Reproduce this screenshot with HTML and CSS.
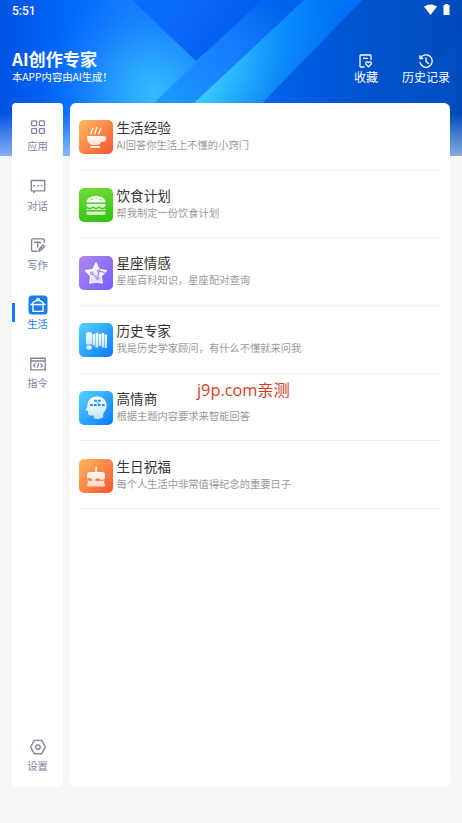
FILE: index.html
```html
<!DOCTYPE html>
<html lang="zh-CN">
<head>
<meta charset="utf-8">
<title>AI创作专家</title>
<link rel="stylesheet" href="styles.css">
</head>
<body>
<svg width="0" height="0" class="defs">
  <defs>
    <linearGradient id="ink" x1="0" y1="0" x2="0" y2="1"><stop offset="0" stop-color="#fff"/><stop offset="1" stop-color="#fff" stop-opacity=".72"/></linearGradient>
  </defs>
</svg>
<div class="app">
  <svg class="backdrop" viewBox="0 0 462 156" preserveAspectRatio="none">
    <defs>
      <linearGradient id="base" x1="0" x2="1" y1="0" y2="0"><stop offset="0" stop-color="#0052e2"/><stop offset=".14" stop-color="#0068fb"/><stop offset=".3" stop-color="#137bff"/><stop offset=".5" stop-color="#006cf8"/><stop offset=".66" stop-color="#005de2"/><stop offset=".8" stop-color="#0052cc"/><stop offset="1" stop-color="#004bbb"/></linearGradient>
      <radialGradient id="glow" gradientUnits="userSpaceOnUse" cx="154" cy="92" r="112"><stop offset="0" stop-color="#35bdff"/><stop offset=".45" stop-color="#2499ff" stop-opacity=".85"/><stop offset="1" stop-color="#1674ff" stop-opacity="0"/></radialGradient>
      <linearGradient id="dark" gradientUnits="userSpaceOnUse" x1="150" y1="0" x2="220" y2="50"><stop offset="0" stop-color="#0a6cfc"/><stop offset=".5" stop-color="#0a68f8"/><stop offset="1" stop-color="#005ff0"/></linearGradient>
      <linearGradient id="bandA" gradientUnits="userSpaceOnUse" x1="280" y1="0" x2="170" y2="103"><stop offset="0" stop-color="#0062ea"/><stop offset=".45" stop-color="#177bff"/><stop offset="1" stop-color="#1c98ff"/></linearGradient>
      <linearGradient id="bandB" gradientUnits="userSpaceOnUse" x1="325" y1="0" x2="215" y2="103"><stop offset="0" stop-color="#007af8"/><stop offset=".35" stop-color="#0d94ff"/><stop offset=".75" stop-color="#2cbcff"/><stop offset="1" stop-color="#36cbff"/></linearGradient>
      <linearGradient id="shade" gradientUnits="userSpaceOnUse" x1="248" y1="50" x2="284" y2="86"><stop offset="0" stop-color="#0068f0" stop-opacity="0"/><stop offset="1" stop-color="#0068f0" stop-opacity=".6"/></linearGradient>
      <linearGradient id="fade" x1="0" x2="0" y1="0" y2="1"><stop offset=".73" stop-color="#fff" stop-opacity="0"/><stop offset="1" stop-color="#f4f8ff" stop-opacity=".55"/></linearGradient>
    </defs>
    <rect width="462" height="156" fill="url(#base)"/>
    <rect width="280" height="156" fill="url(#glow)"/>
    <path d="M132 0 196 61 262 0Z" fill="url(#dark)"/>
    <path d="M262 0H304L193 104H153Z" fill="url(#bandA)"/>
    <path d="M304 0H362L261 104H193Z" fill="url(#bandB)"/>
    <path d="M304 0H362L261 104H193Z" fill="url(#shade)"/>
    <path d="M380 104 462 38V104Z" fill="#005bda" opacity=".15"/>
    <rect width="462" height="156" fill="url(#fade)"/>
  </svg>

  <div class="status">
    <span>5:51</span>
    <svg width="27" height="12" viewBox="0 0 27 12" fill="#fff"><path d="M0 2.6Q6.5-1.6 13 2.6L6.5 11Z"/><path d="M19.5 1H21V0H24V1H25.5V11H19.5Z"/></svg>
  </div>

  <header class="header">
    <div>
      <h1>AI创作专家</h1>
      <p>本APP内容由AI生成！</p>
    </div>
    <nav class="actions">
      <a><svg width="14" height="14" viewBox="0 0 14 14"><path d="M5.5 13H2Q1 13 1 12V2Q1 1 2 1H11Q12 1 12 2V6M4 4.3H9M9.5 12.8 6.9 10.2Q6.2 8.3 7.8 7.9 8.8 7.7 9.5 8.6 10.3 7.7 11.3 7.9 12.8 8.4 12.1 10.2Z"/></svg><span>收藏</span></a>
      <a><svg width="14" height="14" viewBox="0 0 14 14"><path d="M1.6 4A6.2 6.2 0 1 1 .9 8.2M.9 1.2V4.5H4.2M7 3.5V7.2L9.8 10"/></svg><span>历史记录</span></a>
    </nav>
  </header>

  <div class="panels">
    <aside class="side">
      <a><svg width="20" height="20" viewBox="0 0 20 20"><rect x="3.6" y="3.8" width="5" height="4.8" rx=".8"/><rect x="11.4" y="3.8" width="5" height="4.8" rx=".8"/><rect x="3.6" y="11.6" width="5" height="4.8" rx=".8"/><rect x="11.4" y="11.6" width="5" height="4.8" rx=".8"/></svg><span>应用</span></a>
      <a><svg width="20" height="20" viewBox="0 0 20 20"><path d="M3.3 4.5H16.7V14.8H8L5.7 16.3V14.8H3.3Z"/><path d="M6.4 9V10.6M10 9V10.6M13.6 9V10.6" stroke-width="1.6"/></svg><span>对话</span></a>
      <a><svg width="20" height="20" viewBox="0 0 20 20"><path d="M9.5 16.2H5Q3.6 16.2 3.6 15V5Q3.6 3.8 5 3.8H15Q16.2 3.8 16.2 5V8M7 8.3V7.2H12.5V8.3M9.7 7.2V12.3M11 15.9 11.5 13.5 15 10 16.6 11.5 13.1 15.2ZM12 13.8 14.2 12"/></svg><span>写作</span></a>
      <a class="active"><svg width="20" height="20" viewBox="0 0 20 20"><rect class="tile" x=".5" y=".5" width="19" height="19" rx="3.5"/><path class="white" d="M4.3 9Q5.2 5.6 10 5.6T15.7 9M2.4 9.5H17.6M5 9.5V16.4H15V9.5M8.8 5.4V3.8H11.2V5.4"/></svg><span>生活</span></a>
      <a><svg width="20" height="20" viewBox="0 0 20 20"><path d="M2.8 4.2H17.2V15.8H2.8ZM2.8 7H17.2M7.5 9.4 5.7 11.4 7.5 13.4M12.5 9.4 14.3 11.4 12.5 13.4M10.8 9.3 9.2 13.5"/></svg><span>指令</span></a>
      <a class="settings"><svg width="20" height="20" viewBox="0 0 20 20"><path d="M6.3 3.3H13.7L17.4 10 13.7 16.7H6.3L2.6 10Z"/><circle cx="10" cy="10" r="2.2"/></svg><span>设置</span></a>
    </aside>

    <main class="list">
      <article class="row">
        <div class="badge orange"><svg viewBox="0 0 34 34"><path d="M8 16H23Q27.5 16 27.3 18.5 27.2 21.7 22.3 22Q21 25 18 25H13Q8 24 8 16Z"/><rect x="11" y="26" width="10" height="2" rx="1"/><path class="steam" d="M11.5 14.2 14 8M15.5 14.2 18 7M19.5 14.2 22 8"/></svg></div>
        <div><h2>生活经验</h2><p>AI回答你生活上不懂的小窍门</p></div>
      </article>
      <article class="row">
        <div class="badge green"><svg viewBox="0 0 34 34"><path d="M7.5 14.5Q8 8 17 8T26.5 14.5ZM7.5 16H26.5V18.5L23 20 20 18.3 17 20 14 18.3 11 20 7.5 18.5ZM7.5 20.5 11 21.5 14 20 17 21.5 20 20 23 21.5 26.5 20.5V22H7.5ZM7.5 23.5H26.5V26Q26.5 27 25 27H9Q7.5 27 7.5 26Z"/><path d="M12 11.5 14 10.8M16.5 10H18M21 11.5 22.5 12" stroke="#5acb2c" fill="none"/></svg></div>
        <div><h2>饮食计划</h2><p>帮我制定一份饮食计划</p></div>
      </article>
      <article class="row">
        <div class="badge purple"><svg viewBox="0 0 34 34"><path stroke="url(#ink)" stroke-width="1.5" stroke-linejoin="round" d="M17 7 20 13.4 27.4 14.7 22.3 20 23.3 27 17 26 10.7 27 11.7 20 6.6 14.7 14 13.4Z"/><g fill="none" stroke="#8973f4"><path d="M13.7 18.2 17.2 21.1M18.7 20.9 19.6 16.2M21 15.3 26 16.5"/><circle cx="12.7" cy="17.3" r="1.2"/><circle cx="18.3" cy="22.2" r="1.2"/><circle cx="19.8" cy="14.9" r="1.2"/></g></svg></div>
        <div><h2>星座情感</h2><p>星座百科知识，星座配对查询</p></div>
      </article>
      <article class="row">
        <div class="badge blue"><svg viewBox="0 0 34 34"><path d="M7 11Q7 9 10 9T13 11V21.5H7Z"/><rect x="7.3" y="22.6" width="5.6" height="4.2" rx="2"/><path d="M13.6 11H16V22.5H13.6ZM16.5 9.7H19.2V24.5H16.5ZM19.7 11H22V23H19.7ZM22.5 10H25.2V24.5H22.5ZM25.7 11.5H28V25H25.7Z"/></svg></div>
        <div><h2>历史专家</h2><p>我是历史学家顾问，有什么不懂就来问我</p></div>
      </article>
      <article class="row">
        <div class="badge blue"><svg viewBox="0 0 34 34"><path d="M18 5.5C24.5 5.5 28 10 27.6 15.5 27.3 19.5 24.8 21 24.2 23V26.5Q19 28.8 14.8 27.3V24.5H11Q9 24.3 9 21.5V20L6.5 19.3 8.5 15C8.2 9.5 12 5.5 18 5.5Z"/><path d="M15.2 9.7H17.8M19 9.7H21.6M11.2 14H13.8M15 14H17.6M18.8 14H21.4M23 14H25.6" stroke="#168eff" stroke-width="2" fill="none"/><path d="M17.5 10.5 19.8 13" stroke="#168eff"/></svg></div>
        <div><h2>高情商</h2><p>根据主题内容要求来智能回答</p></div>
      </article>
      <article class="row">
        <div class="badge orange"><svg viewBox="0 0 34 34"><path d="M16.3 8H17.9V13H23Q26 13 26 16V19.5Q23.5 22 21 20.2T16.8 20.2 12.8 20.2 8 19.5V16Q8 13 11 13H16.3ZM8.7 21.3Q11 22.6 12.8 21.5 15 20.5 16.9 21.7 19 22.8 20.8 21.5 23 22.5 25.3 21.3V24.5L26.5 26.5Q26 27.5 24.5 27.5H9.5Q8 27.5 7.7 26.5L8.7 24.5Z"/></svg></div>
        <div><h2>生日祝福</h2><p>每个人生活中非常值得纪念的重要日子</p></div>
      </article>
    </main>
  </div>
  <div class="watermark">j9p.com亲测</div>
</div>
</body>
</html>
```
FILE: styles.css
```css
* { box-sizing: border-box; }
body, h1, h2, p { margin: 0; }
body { font-family: "Noto Sans CJK SC", sans-serif; background: #f6f6f6; }
.defs { position: absolute; }
.app { position: relative; width: 462px; height: 823px; display: flex; flex-direction: column; overflow: hidden; isolation: isolate; }
.backdrop { position: absolute; z-index: -1; top: 0; left: 0; width: 462px; height: 156px; }

.status { height: 22px; padding: 0 12px; display: flex; align-items: center; justify-content: space-between; color: #fff; font: 500 12px/22px Roboto, sans-serif; }
.status svg { margin: -3px -1px 0 0; }

.header { height: 81px; padding: 26px 12px 0; display: flex; justify-content: space-between; color: #fff; }
.header h1 { font-size: 17.1px; line-height: 22px; font-weight: 700; white-space: nowrap; }
.header p { font-size: 10.3px; line-height: 14px; white-space: nowrap; }
.actions { display: flex; gap: 24px; padding-top: 6px; }
.actions a { display: flex; flex-direction: column; align-items: center; font-size: 12px; line-height: 16px; }
.actions svg { fill: none; stroke: #fff; stroke-width: 1.3; margin-bottom: 1px; }

.panels { height: 684px; padding: 0 12px; display: flex; gap: 7px; }
.side { width: 51px; background: #fff; border-radius: 4px; padding-top: 14px; display: flex; flex-direction: column; }
.side a { position: relative; height: 59.2px; flex: none; display: flex; flex-direction: column; align-items: center; color: #8183a3; font-size: 10.3px; line-height: 16px; }
.side svg { fill: none; stroke: #8183a3; stroke-width: 1.35; margin-bottom: 1.4px; }
.side .active { color: #187eee; }
.side .active::before { content: ""; position: absolute; left: 0; top: 8px; width: 3px; height: 19px; background: #187eee; }
.side .tile { fill: #187eee; stroke: none; }
.side .white { stroke: #fff; }
.side .settings { margin-top: auto; height: 50px; }

.list { width: 380px; background: #fff; border-radius: 6px; padding: 0 9px; }
.row { height: 67.7px; border-bottom: 1px solid #ededed; padding-top: 17.4px; display: flex; gap: 3.5px; }
.badge { width: 34px; height: 34px; border-radius: 5px; flex: none; }
.badge svg { display: block; width: 34px; height: 34px; fill: url(#ink); }
.steam { fill: none; stroke: #fff; stroke-width: 1.3; }
.orange { background: linear-gradient(135deg, #ffb961, #f55530); }
.green { background: linear-gradient(170deg, #74da37, #2dc313); }
.purple { background: linear-gradient(135deg, #b187f0, #755ffb); }
.blue { background: linear-gradient(135deg, #55d4ff, #0879ff); }
.row h2 { font-size: 13.6px; line-height: 18px; font-weight: 400; color: #333; margin-top: -2.3px; }
.row p { font-size: 10.28px; line-height: 16px; color: #999; white-space: nowrap; margin-top: 1px; }

.watermark { position: absolute; left: 197px; top: 379px; font-family: "Open Sans", "Noto Sans CJK SC", sans-serif; font-size: 16.3px; line-height: 22px; color: #da3c26; }
```
